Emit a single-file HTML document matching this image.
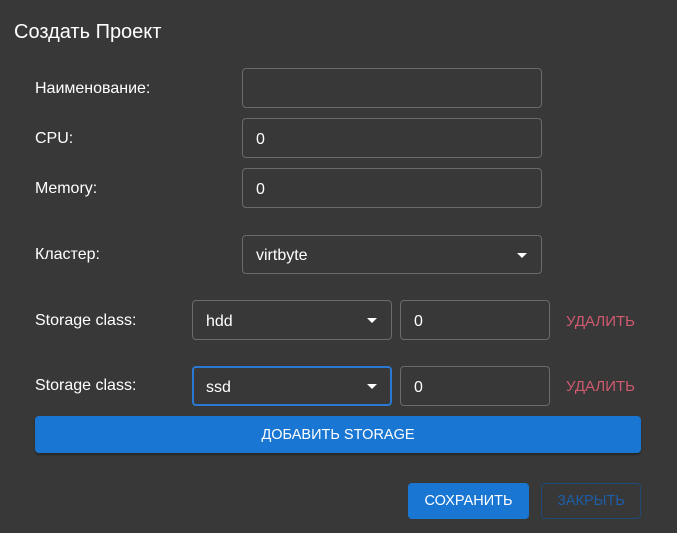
<!DOCTYPE html>
<html><head><meta charset="utf-8"><style>
*{box-sizing:border-box;margin:0;padding:0}
body{width:677px;height:533px;background:#383838;font-family:"Liberation Sans",Arial,sans-serif;color:#fff;position:relative;overflow:hidden}
.a{position:absolute}
.t{left:14px;top:21px;font-size:20px}
.l{left:35px;font-size:16px}
.f{border:1px solid #6a6a6a;border-radius:4px;font-size:16px;padding-left:13px;padding-top:3px;display:flex;align-items:center}
.ar{position:absolute;right:14px;top:50%;margin-top:-2px;width:0;height:0;border-left:5px solid transparent;border-right:5px solid transparent;border-top:5px solid #fff}
.d{color:#d05a6e;font-size:15px}
.b{border-radius:4px;font-size:14.5px;display:flex;align-items:center;justify-content:center}
</style></head><body>
<div class="a t">Создать Проект</div>
<div class="a l" style="top:80px">Наименование:</div>
<div class="a f" style="left:242px;top:68px;width:300px;height:40px"></div>
<div class="a l" style="top:130px">CPU:</div>
<div class="a f" style="left:242px;top:118px;width:300px;height:40px">0</div>
<div class="a l" style="top:180px">Memory:</div>
<div class="a f" style="left:242px;top:168px;width:300px;height:40px">0</div>
<div class="a l" style="top:246px">Кластер:</div>
<div class="a f" style="left:242px;top:235px;width:300px;height:39px">virtbyte<span class="ar"></span></div>
<div class="a l" style="top:312px">Storage class:</div>
<div class="a f" style="left:192px;top:300px;width:200px;height:40px">hdd<span class="ar"></span></div>
<div class="a f" style="left:400px;top:300px;width:150px;height:40px">0</div>
<div class="a d" style="left:566px;top:313px">УДАЛИТЬ</div>
<div class="a l" style="top:377px">Storage class:</div>
<div class="a f" style="left:192px;top:366px;width:200px;height:40px;border:2px solid #2a78d0;padding-left:12px">ssd<span class="ar" style="right:13px"></span></div>
<div class="a f" style="left:400px;top:366px;width:150px;height:40px">0</div>
<div class="a d" style="left:566px;top:378px">УДАЛИТЬ</div>
<div class="a b" style="left:35px;top:416px;width:606px;height:37px;background:#1976d2;box-shadow:0 2px 2px rgba(0,0,0,.3)">ДОБАВИТЬ STORAGE</div>
<div class="a b" style="left:408px;top:483px;width:121px;height:36px;background:#1976d2">СОХРАНИТЬ</div>
<div class="a b" style="left:541px;top:483px;width:100px;height:36px;border:1px solid #1f4a75;color:#1d5ea8">ЗАКРЫТЬ</div>
</body></html>
